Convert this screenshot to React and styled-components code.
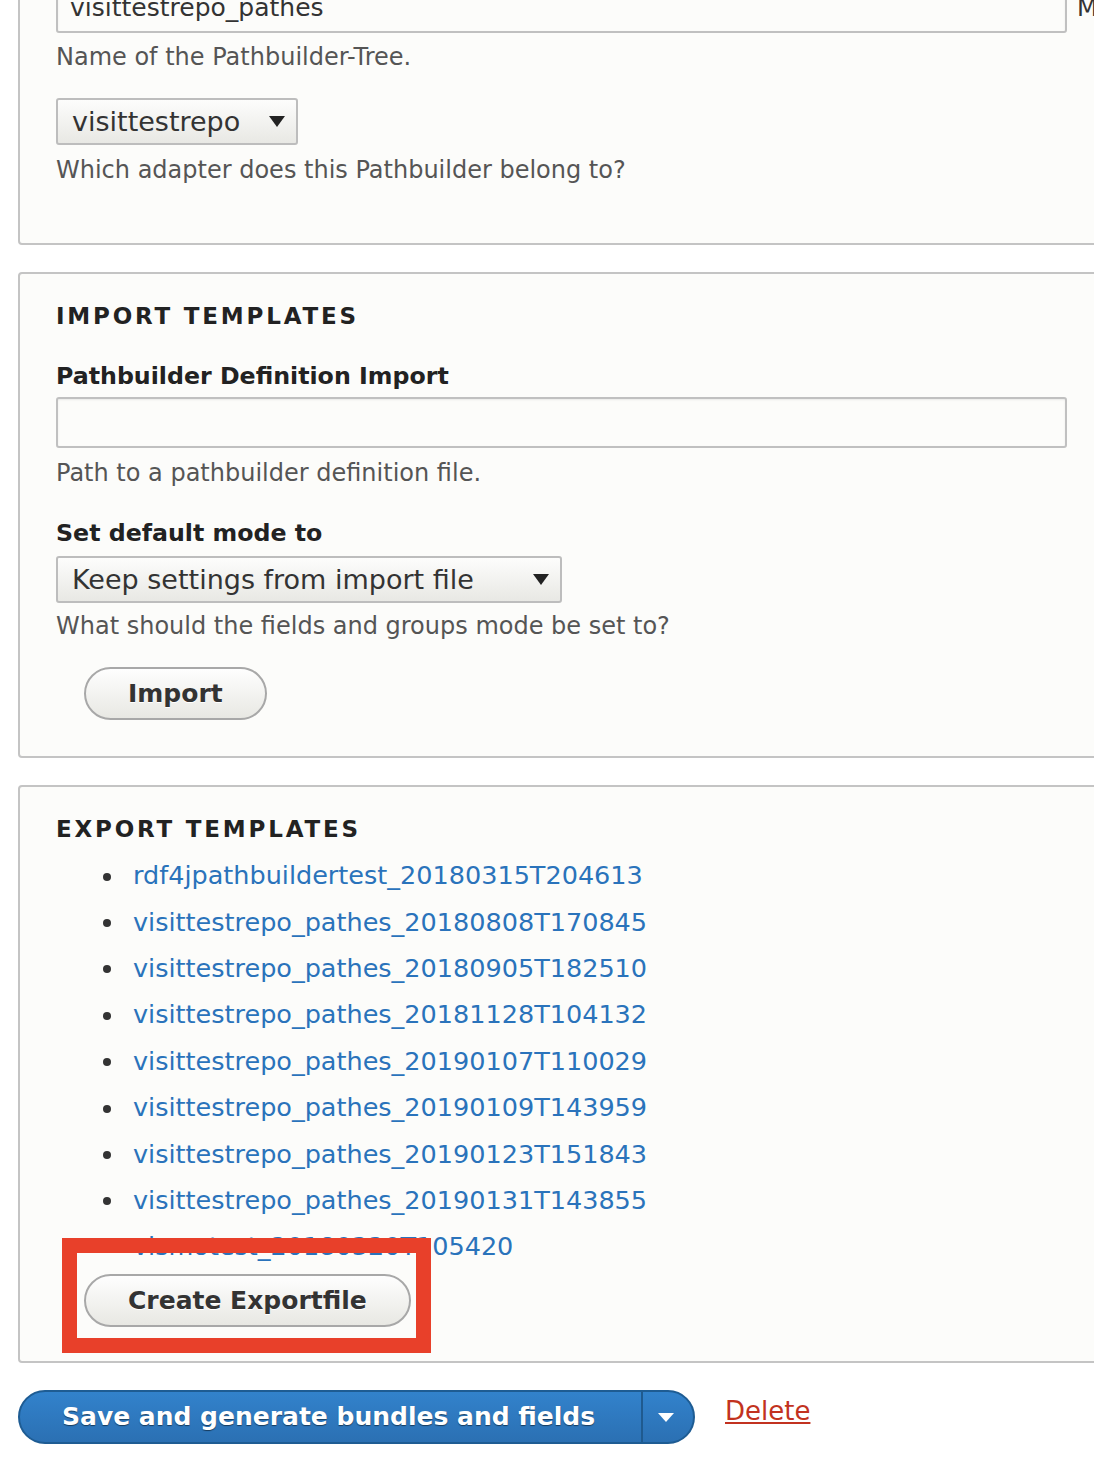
import React from "react";
import styled, { createGlobalStyle } from "styled-components";

const Global = createGlobalStyle`
  html, body { margin: 0; padding: 0; background: #ffffff; overflow: hidden; }
  body { font-family: "DejaVu Sans", "Liberation Sans", sans-serif; color: #333; }
`;

const Page = styled.div`
  width: 1110px;
  padding-left: 18px;
  margin-top: -20px;
  display: flex;
  flex-direction: column;
  gap: 27px;
`;

const Fieldset = styled.section`
  background: #fcfcfa;
  border: 2px solid #c4c4c4;
  border-radius: 4px;
  padding: ${(p) => p.$pad || "24px 36px 30px"};
  display: flex;
  flex-direction: column;
`;

const Legend = styled.h2`
  margin: 0 0 ${(p) => p.$mb || "30px"};
  font-size: 23px;
  font-weight: bold;
  letter-spacing: 2.8px;
  text-transform: uppercase;
  color: #222;
  line-height: 30px;
`;

const Label = styled.label`
  display: block;
  font-size: 23.7px;
  font-weight: bold;
  color: #222;
  line-height: 30px;
  margin-top: ${(p) => p.$mt || "0"};
  margin-bottom: ${(p) => p.$mb || "6px"};
`;

const Row = styled.div`
  display: flex;
  align-items: center;
  gap: 10px;
  white-space: nowrap;
`;

const TextInput = styled.div`
  box-sizing: border-box;
  flex-shrink: 0;
  width: 1011px;
  height: 51px;
  border: 2px solid #c0c0c0;
  border-radius: 3px;
  background: #fcfcfa;
  box-shadow: inset 0 1px 2px rgba(0, 0, 0, 0.08);
  font-size: 25px;
  line-height: 47px;
  padding: 0 12px;
  color: #333;
`;

const Aside = styled.span`
  font-size: 24px;
  line-height: 32px;
  color: #333;
`;

const Desc = styled.div`
  font-size: 24px;
  color: #555;
  line-height: 30px;
  margin-top: ${(p) => p.$mt || "9px"};
`;

const Select = styled.div`
  box-sizing: border-box;
  width: ${(p) => p.$w};
  height: 47px;
  margin-top: ${(p) => p.$mt || "0"};
  border: 2px solid #bdbdbd;
  border-radius: 3px;
  background: linear-gradient(#fdfdfc, #e8e8e4);
  display: flex;
  align-items: center;
  justify-content: space-between;
  padding: 0 11px 0 14px;
  font-size: 27px;
  color: #333;
`;

const Caret = styled.span`
  width: 0;
  height: 0;
  border-left: 8px solid transparent;
  border-right: 8px solid transparent;
  border-top: 11px solid #222;
`;

const Button = styled.button`
  box-sizing: border-box;
  align-self: flex-start;
  font-family: inherit;
  font-weight: bold;
  font-size: 25px;
  color: #333;
  height: 53px;
  padding: 0 42px;
  border: 2px solid #a8a8a8;
  border-radius: 30px;
  background: linear-gradient(#fefefe, #e8e8e3);
  text-shadow: 0 1px 0 #fff;
  margin-left: 28px;
  margin-top: ${(p) => p.$mt || "0"};
`;

const List = styled.ul`
  margin: 0;
  padding: 0 0 0 47px;
  list-style: none;
`;

const Item = styled.li`
  display: flex;
  align-items: center;
  height: 46.4px;
  font-size: 25.5px;
  &::before {
    content: "";
    width: 8px;
    height: 8px;
    border-radius: 50%;
    background: #333;
    margin-right: 22px;
    margin-top: 3px;
  }
`;

const Link = styled.a`
  color: #2a73bb;
  text-decoration: none;
`;

const Highlight = styled.div`
  position: relative;
  align-self: flex-start;
  margin-top: 4px;
`;

const RedBox = styled.div`
  position: absolute;
  left: 6px;
  top: -36px;
  right: -20px;
  bottom: -26px;
  border: 15px solid #e8402a;
  pointer-events: none;
`;

const Actions = styled.div`
  display: flex;
  align-items: center;
  gap: 30px;
  margin-bottom: 40px;
`;

const SplitButton = styled.div`
  display: flex;
  height: 54px;
  border: 2px solid #1e5c93;
  border-radius: 30px;
  background: linear-gradient(#3282cc, #2b70b3);
  overflow: hidden;
  box-sizing: border-box;
  width: 677px;
`;

const Primary = styled.span`
  flex: 1;
  display: flex;
  align-items: center;
  padding-left: 42px;
  font-weight: bold;
  font-size: 25px;
  color: #fff;
  text-shadow: 0 1px 1px rgba(0, 0, 0, 0.5);
  border-right: 2px solid #1f5a8f;
`;

const Toggle = styled.span`
  width: 46px;
  display: flex;
  align-items: center;
  justify-content: center;
  padding-right: 4px;
`;

const WhiteCaret = styled.span`
  width: 0;
  height: 0;
  border-left: 8px solid transparent;
  border-right: 8px solid transparent;
  border-top: 9px solid #fff;
  margin-top: 2px;
`;

const Danger = styled.a`
  color: #c23220;
  font-size: 26px;
  text-decoration: underline;
  margin-bottom: 12px;
`;

const links = [
  "rdf4jpathbuildertest_20180315T204613",
  "visittestrepo_pathes_20180808T170845",
  "visittestrepo_pathes_20180905T182510",
  "visittestrepo_pathes_20181128T104132",
  "visittestrepo_pathes_20190107T110029",
  "visittestrepo_pathes_20190109T143959",
  "visittestrepo_pathes_20190123T151843",
  "visittestrepo_pathes_20190131T143855",
  "vismotest_20180320T105420",
];

export default function App() {
  return (
    <>
      <Global />
      <Page>
        <Fieldset $pad="0 36px 58px">
          <Row>
            <TextInput>visittestrepo_pathes</TextInput>
            <Aside>Machine name: visittestrepo_pathes</Aside>
          </Row>
          <Desc>Name of the Pathbuilder-Tree.</Desc>
          <Select $w="242px" $mt="26px">
            visittestrepo <Caret />
          </Select>
          <Desc $mt="10px">Which adapter does this Pathbuilder belong to?</Desc>
        </Fieldset>

        <Fieldset $pad="27px 36px 36px">
          <Legend>Import templates</Legend>
          <Label>Pathbuilder Definition Import</Label>
          <TextInput />
          <Desc $mt="10px">Path to a pathbuilder definition file.</Desc>
          <Label $mt="30px" $mb="8px">Set default mode to</Label>
          <Select $w="506px">
            Keep settings from import file <Caret />
          </Select>
          <Desc $mt="8px">What should the fields and groups mode be set to?</Desc>
          <Button $mt="26px">Import</Button>
        </Fieldset>

        <Fieldset $pad="27px 36px 34px">
          <Legend $mb="8px">Export templates</Legend>
          <List>
            {links.map((l) => (
              <Item key={l}>
                <Link href="#">{l}</Link>
              </Item>
            ))}
          </List>
          <Highlight>
            <Button>Create Exportfile</Button>
            <RedBox />
          </Highlight>
        </Fieldset>

        <Actions>
          <SplitButton>
            <Primary>Save and generate bundles and fields</Primary>
            <Toggle>
              <WhiteCaret />
            </Toggle>
          </SplitButton>
          <Danger href="#">Delete</Danger>
        </Actions>
      </Page>
    </>
  );
}
